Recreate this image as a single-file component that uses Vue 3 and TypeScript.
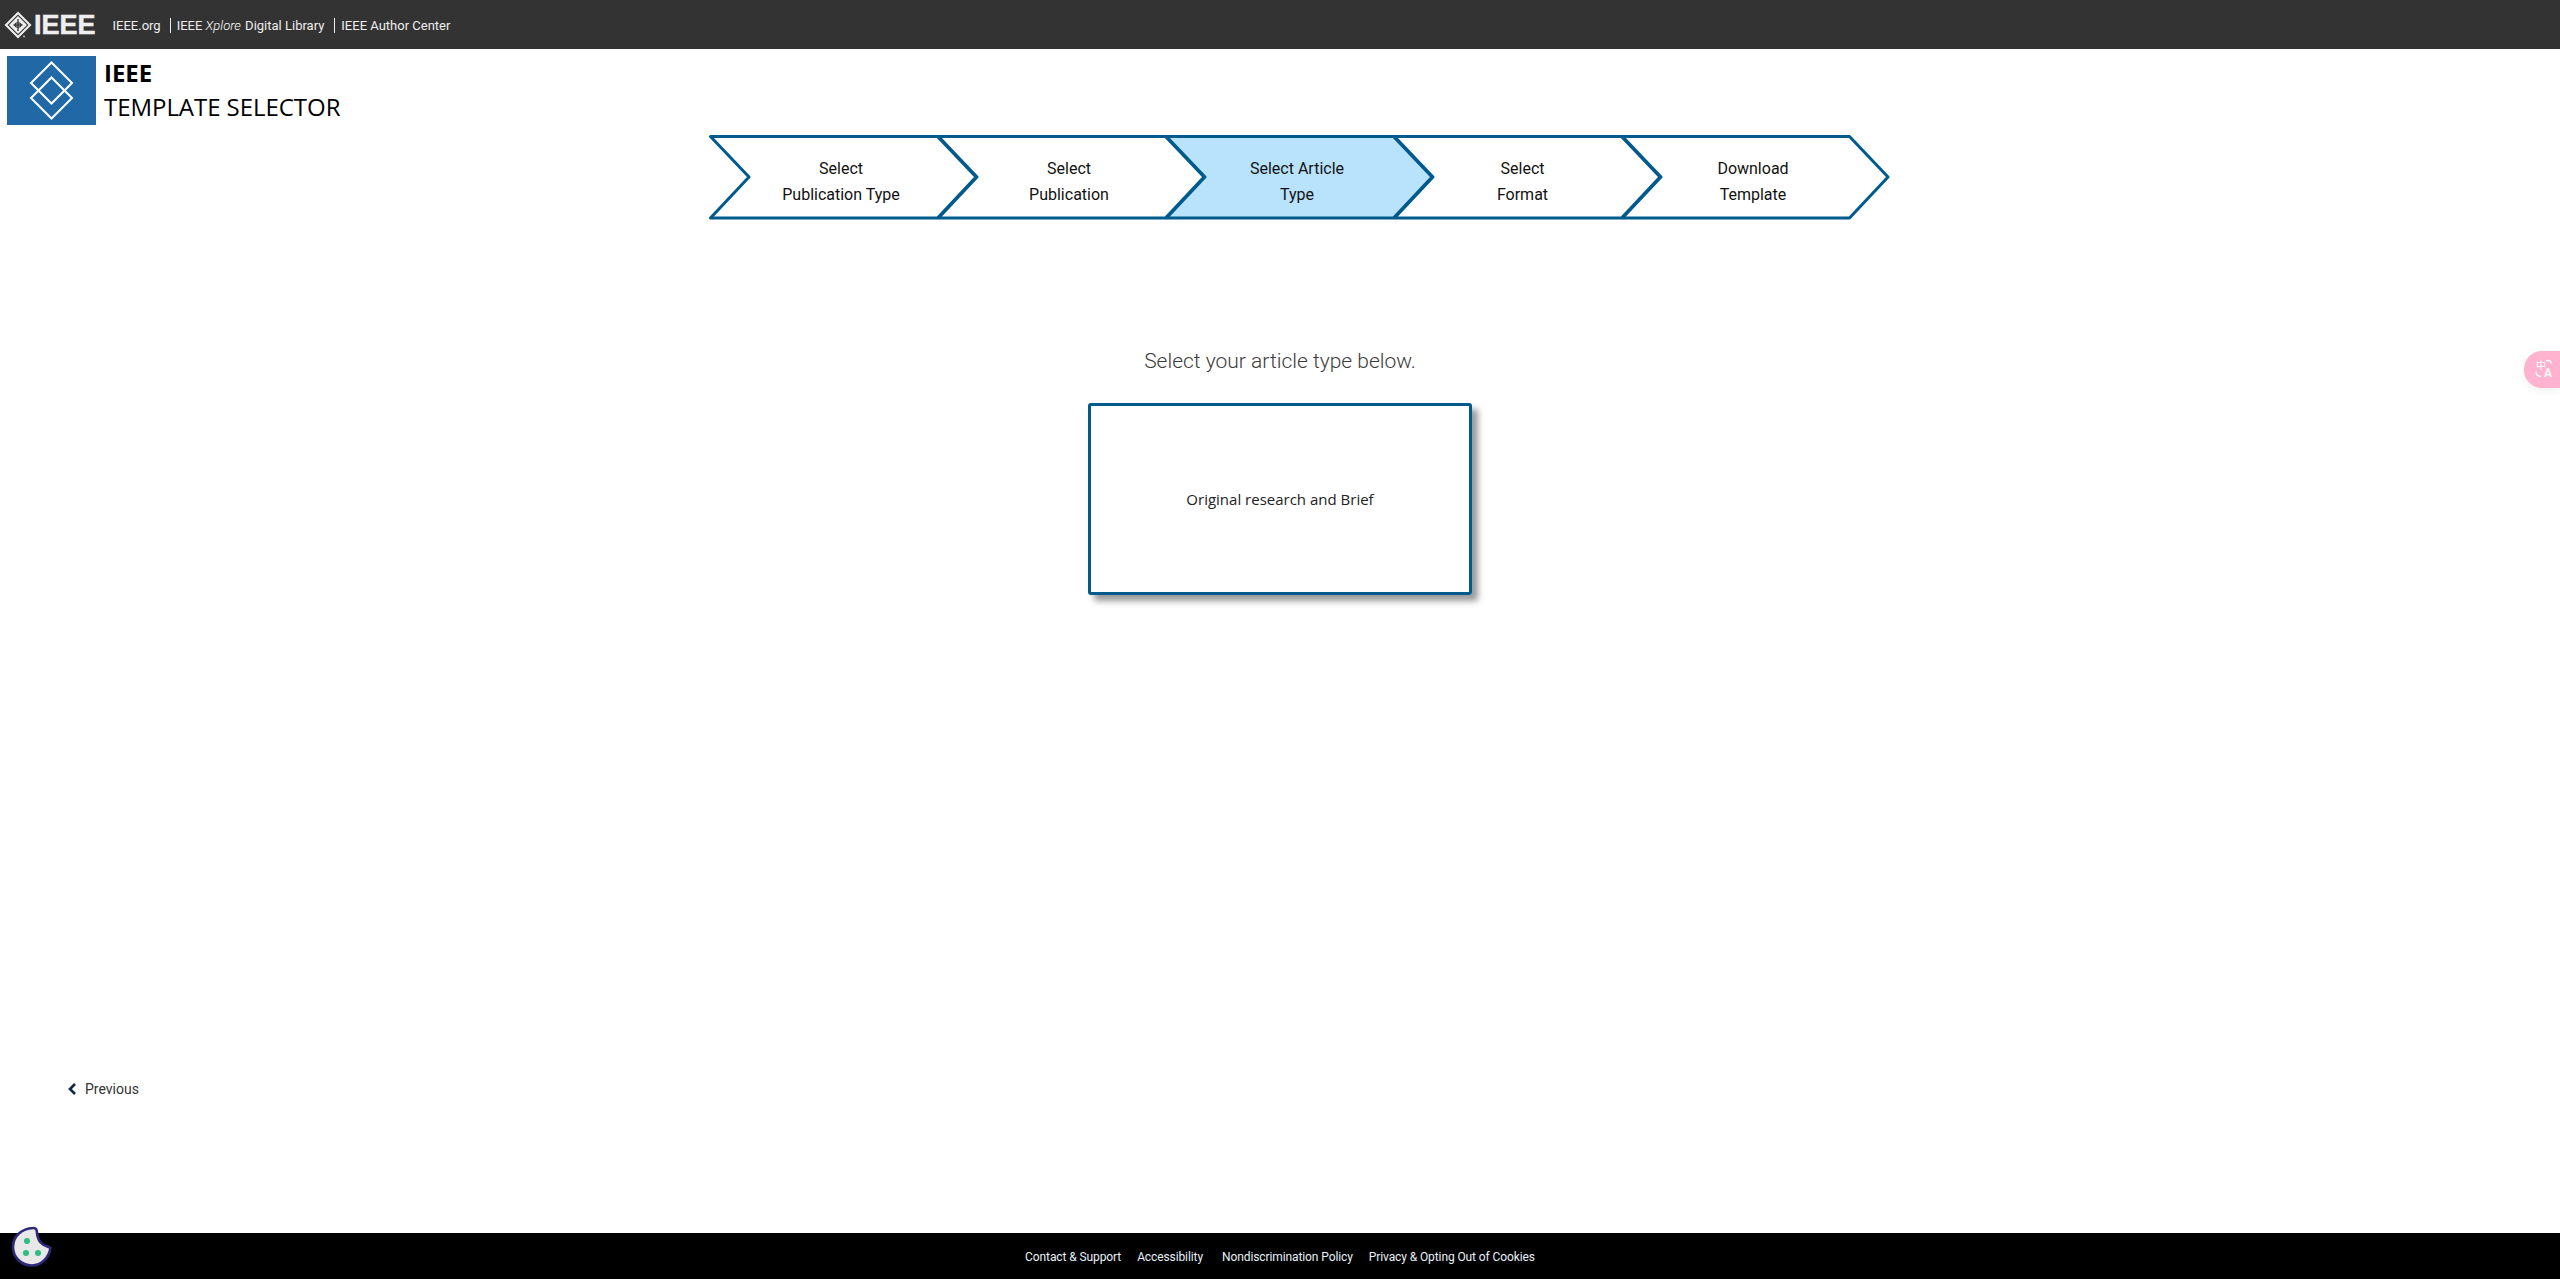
<script setup lang="ts">
interface Step { lines: string[]; active?: boolean }
const steps: Step[] = [
  { lines: ['Select', 'Publication Type'] },
  { lines: ['Select', 'Publication'] },
  { lines: ['Select Article', 'Type'], active: true },
  { lines: ['Select', 'Format'] },
  { lines: ['Download', 'Template'] },
]
const footerLinks = ['Contact & Support', 'Accessibility', 'Nondiscrimination Policy', 'Privacy & Opting Out of Cookies']
</script>

<template>
  <div class="page">
    <nav class="topbar">
      <div class="brand">
        <svg class="brand-mark" viewBox="0 0 28 28" width="28" height="28">
          <path d="M14 0.5 L27.5 14 L14 27.5 L0.5 14 Z" fill="#eee" />
          <path d="M14 3.5 L24.5 14 L14 24.5 L3.5 14 Z" fill="#333" />
          <path d="M14 5 L23 14 L14 23 L5 14 Z" fill="#eee" />
          <path d="M14 8 V20 M9.5 14 H18.5" stroke="#333" stroke-width="1.3" fill="none" />
          <ellipse cx="14" cy="14" rx="3" ry="2.2" fill="none" stroke="#333" stroke-width="1.1" />
          <circle cx="20" cy="25.5" r="1" fill="#bbb" />
        </svg>
        <span class="brand-word">IEEE</span>
      </div>
      <div class="navlinks">
        <a class="navlink first">IEEE.org</a>
        <a class="navlink">IEEE <em>Xplore</em> Digital Library</a>
        <a class="navlink">IEEE Author Center</a>
      </div>
    </nav>

    <header class="apphead">
      <div class="applogo">
        <svg viewBox="0 0 89 69" width="89" height="69">
          <g fill="none" stroke="#fff" stroke-width="2">
            <path d="M44.5 6.5 L65 27 L44.5 47.5 L24 27 Z" />
            <path d="M44.5 21.5 L65 42 L44.5 62.5 L24 42 Z" />
          </g>
        </svg>
      </div>
      <div class="apptitle">
        <strong>IEEE</strong>
        <span>TEMPLATE SELECTOR</span>
      </div>
    </header>

    <div class="steps">
      <div v-for="s in steps" :key="s.lines.join()" class="step">
        <svg class="chev" width="268" height="84" viewBox="0 0 268 84">
          <path
            d="M0.5 1.5 H227.5 L266 42 L227.5 83 H0.5 L39 42 Z"
            :fill="s.active ? '#b9e3fd' : '#fff'"
            stroke="#005a8c"
            stroke-width="3"
            stroke-linejoin="round"
          />
        </svg>
        <div class="steplabel">
          <span v-for="l in s.lines" :key="l">{{ l }}</span>
        </div>
      </div>
    </div>

    <main class="content">
      <h2 class="prompt">Select your article type below.</h2>
      <div class="card">Original research and Brief</div>
    </main>

    <div class="prevrow">
      <svg class="prevchev" width="9" height="12" viewBox="0 0 9 12">
        <path d="M7 1 L2 6 L7 11" fill="none" stroke="#0f2748" stroke-width="2.6" />
      </svg>
      <span>Previous</span>
    </div>

    <footer class="foot">
      <a v-for="f in footerLinks" :key="f" class="footlink">{{ f }}</a>
    </footer>

    <div class="translate">
      <span class="tr-zh">中</span>
      <span class="tr-en">A</span>
      <svg class="tr-arcs" width="20" height="20" viewBox="0 0 20 20">
        <path d="M12 1.5 H14.5 Q17 1.5 17 4.5 M2 12.5 Q2 17.5 7 17.5" fill="none" stroke="#fff" stroke-width="1.3" />
      </svg>
    </div>

    <svg class="cookie" width="42" height="44" viewBox="0 0 42 44">
      <path
        d="M22 3 C25 2.5 26 5 26 8 C26.5 13 29 17.5 32 19.5 C34 21 37 21 39.5 23 C38 33 30 40.5 21 40.5 C10 40.5 2 32 2 22 C2 11 11 3.5 22 3 Z"
        fill="#e8e8e8"
        stroke="#2f2a78"
        stroke-width="2.6"
      />
      <circle cx="16" cy="16" r="3" fill="#2dbd80" />
      <circle cx="15" cy="28" r="3" fill="#2dbd80" />
      <circle cx="27" cy="28" r="3" fill="#2dbd80" />
    </svg>
  </div>
</template>

<style>
html, body { margin: 0; background: #fff; }
</style>

<style scoped>
.page {
  position: relative;
  height: 100vh;
  display: flex;
  flex-direction: column;
  overflow: hidden;
  font-family: Roboto, "Liberation Sans", sans-serif;
  color: #111;
}
.topbar {
  height: 49px;
  flex: none;
  background: #333;
  display: flex;
  align-items: center;
  padding-left: 4px;
  box-sizing: border-box;
}
.brand { display: flex; align-items: center; gap: 2px; }
.brand-mark { display: block; }
.brand-word {
  font-family: "Liberation Sans", Arial, sans-serif;
  font-weight: 700;
  font-size: 27px;
  line-height: 28px;
  color: #eee;
  -webkit-text-stroke: 0.5px #eee;
}
.navlinks { display: flex; align-items: center; margin-left: 17px; padding-top: 2px; }
.navlink {
  font-size: 13px;
  line-height: 15px;
  color: #eee;
  padding: 0 10px 0 6px;
  border-left: 1px solid #eee;
}
.navlink em { font-style: italic; font-weight: 300; color: #fff; padding-right: 1px; }
.navlink.first { border-left: 0; padding: 0 9px 0 0; }

.apphead {
  display: flex;
  flex: none;
  padding: 7px 0 0 7px;
  gap: 8px;
}
.applogo { width: 89px; height: 69px; background: #2068a6; }
.applogo svg { display: block; }
.apptitle {
  display: flex;
  flex-direction: column;
  font-family: "Open Sans", "Liberation Sans", sans-serif;
  font-size: 24px;
  line-height: 34px;
  letter-spacing: -0.05px;
  color: #000;
}
.apptitle strong { font-weight: 700; }

.steps {
  display: flex;
  flex: none;
  margin: 10px 0 0 710px;
}
.step {
  position: relative;
  width: 262px;
  height: 84px;
  margin-right: -34px;
}
.chev { position: absolute; left: 0; top: 0; overflow: visible; }
.steplabel {
  position: relative;
  height: 100%;
  box-sizing: border-box;
  padding-top: 10px;
  display: flex;
  flex-direction: column;
  align-items: center;
  justify-content: center;
  font-size: 16px;
  line-height: 26px;
  color: #111;
}
.step:nth-child(4) .steplabel { padding-right: 5px; }

.content {
  flex: 1;
  display: flex;
  flex-direction: column;
  align-items: center;
}
.prompt {
  margin: 128px 0 28px;
  font-size: 21px;
  line-height: 28px;
  font-weight: 300;
  color: #3c3c3c;
}
.card {
  width: 384px;
  height: 192px;
  box-sizing: border-box;
  border: 3px solid #005a8c;
  border-radius: 3px;
  box-shadow: 6px 6px 6px #999;
  display: flex;
  align-items: center;
  justify-content: center;
  font-family: "Open Sans", "Liberation Sans", sans-serif;
  font-size: 15px;
  color: #222;
}

.prevrow {
  flex: none;
  display: flex;
  align-items: center;
  height: 20px;
  padding: 0 0 134px 68px;
  font-size: 14px;
  color: #333;
}
.prevchev { margin-right: 8px; }

.foot {
  flex: none;
  height: 46px;
  padding-top: 1px;
  box-sizing: border-box;
  background: #000;
  display: flex;
  align-items: center;
  justify-content: center;
  gap: 16px;
  font-size: 12px;
  letter-spacing: -0.1px;
  color: #e8f0f8;
}
.footlink { white-space: nowrap; }
.footlink:nth-child(2) { margin-right: 3px; }

.translate {
  position: absolute;
  right: 0;
  top: 351px;
  width: 36px;
  height: 37px;
  border-radius: 18px 0 0 18px;
  background: #ffb3cf;
  box-shadow: 0 3px 8px rgba(0, 0, 0, 0.06);
  color: #fff;
}
.tr-zh {
  position: absolute;
  left: 12px;
  top: 8px;
  font-family: "Noto Sans CJK SC", sans-serif;
  font-size: 10px;
  line-height: 12px;
}
.tr-en {
  position: absolute;
  left: 20px;
  top: 15px;
  font-family: Roboto, sans-serif;
  font-size: 12px;
  line-height: 14px;
  font-weight: 500;
}
.tr-arcs { position: absolute; left: 10px; top: 8px; }

.cookie { position: absolute; left: 11px; top: 1225px; }
</style>
